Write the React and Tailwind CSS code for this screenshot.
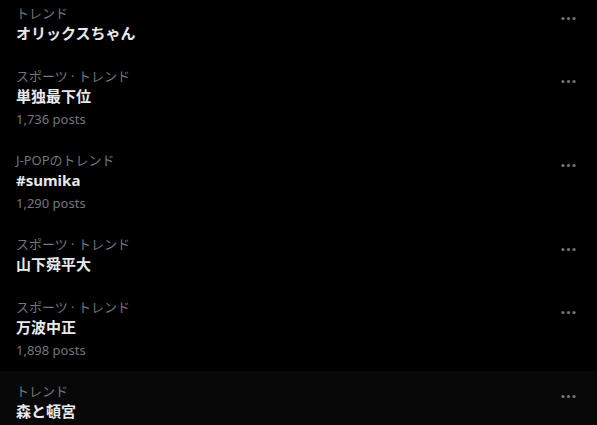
import React from 'react';

const trends = [
  { category: 'トレンド', title: 'オリックスちゃん' },
  { category: 'スポーツ · トレンド', title: '単独最下位', posts: '1,736 posts' },
  { category: 'J-POPのトレンド', title: '#sumika', posts: '1,290 posts' },
  { category: 'スポーツ · トレンド', title: '山下舜平大' },
  { category: 'スポーツ · トレンド', title: '万波中正', posts: '1,898 posts' },
  { category: 'トレンド', title: '森と頓宮', hover: true },
];

const MoreIcon = () => (
  <svg viewBox="0 0 24 24" className="w-[19px] h-[19px] fill-[#71767b]">
    <circle cx="5" cy="12" r="2" />
    <circle cx="12" cy="12" r="2" />
    <circle cx="19" cy="12" r="2" />
  </svg>
);

const TrendItem = ({ item }) => (
  <div className={`flex justify-between px-4 pt-3 pb-[13px] ${item.hover ? 'bg-[#080808]' : ''}`}>
    <div className="flex flex-col">
      <div className="text-[13px] leading-4 text-[#71767b]">{item.category}</div>
      <div className="mt-[2px] text-[15px] leading-5 font-bold text-[#e7e9ea]">{item.title}</div>
      {item.posts && (
        <div className="mt-[5px] text-[13px] leading-4 text-[#71767b]">{item.posts}</div>
      )}
    </div>
    <div className="flex items-start pt-[4px] pr-[3px]">
      <MoreIcon />
    </div>
  </div>
);

export default function App() {
  return (
    <div
      className="w-[597px] h-[425px] overflow-hidden bg-black"
      style={{ fontFamily: '"Noto Sans", "Noto Sans CJK JP", sans-serif' }}
    >
      <div className="-mt-[7px]">
        {trends.map((t, i) => (
          <TrendItem key={i} item={t} />
        ))}
      </div>
    </div>
  );
}
